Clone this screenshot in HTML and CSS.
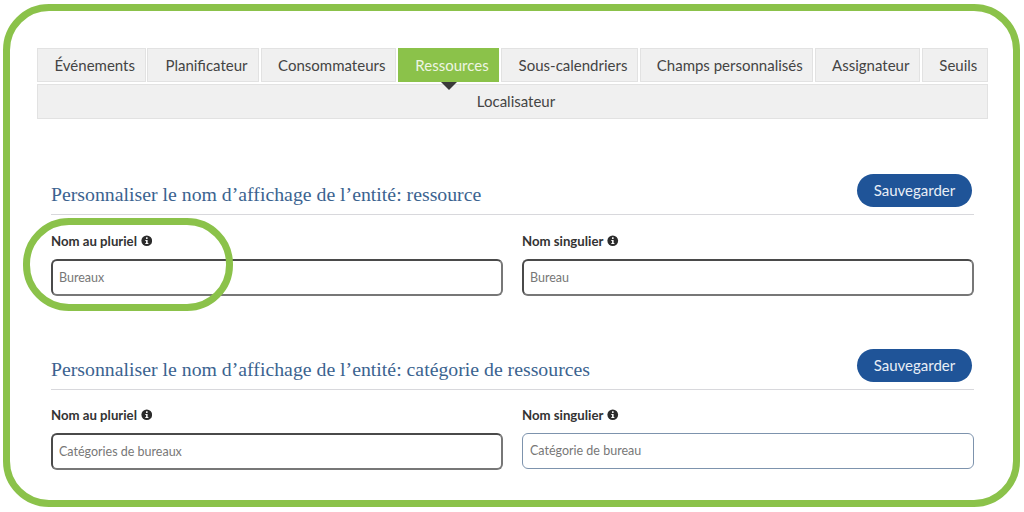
FILE: index.html
```html
<!DOCTYPE html>
<html lang="fr">
<head>
    <meta name="viewport" content="width=device-width, initial-scale=1.0">
    <title>Personnaliser les ressources</title>
    <link rel="stylesheet" href="styles.css">
</head>
<body>
    <div class="frame">
        <nav class="tabs">
            <a class="tab tab-events">Événements</a>
            <a class="tab tab-planner">Planificateur</a>
            <a class="tab tab-consumers">Consommateurs</a>
            <a class="tab tab-resources active">Ressources</a>
            <a class="tab tab-calendars">Sous-calendriers</a>
            <a class="tab tab-fields">Champs personnalisés</a>
            <a class="tab tab-assign">Assignateur</a>
            <a class="tab tab-limits">Seuils</a>
            <a class="tab tab-locator">Localisateur</a>
        </nav>

        <section class="entity entity-first">
            <div class="entity-header">
                <h2>Personnaliser le nom d’affichage de l’entité: ressource</h2>
                <button>Sauvegarder</button>
            </div>
            <div class="fields">
                <div class="field">
                    <label>Nom au pluriel
                        <svg class="info" viewBox="0 0 12 12"><circle cx="6" cy="6" r="5.6" fill="#2b2b2b"/><rect x="5.2" y="2.4" width="1.7" height="1.7" fill="#fff"/><path d="M4.5 5.1h2.4v3.3h.8v1.1H4.5V8.4h.8V6.2h-.8z" fill="#fff"/></svg>
                    </label>
                    <input class="dark" placeholder="Bureaux">
                </div>
                <div class="field">
                    <label>Nom singulier
                        <svg class="info" viewBox="0 0 12 12"><circle cx="6" cy="6" r="5.6" fill="#2b2b2b"/><rect x="5.2" y="2.4" width="1.7" height="1.7" fill="#fff"/><path d="M4.5 5.1h2.4v3.3h.8v1.1H4.5V8.4h.8V6.2h-.8z" fill="#fff"/></svg>
                    </label>
                    <input class="dark" placeholder="Bureau">
                </div>
            </div>
        </section>

        <section class="entity entity-second">
            <div class="entity-header">
                <h2>Personnaliser le nom d’affichage de l’entité: catégorie de ressources</h2>
                <button>Sauvegarder</button>
            </div>
            <div class="fields">
                <div class="field">
                    <label>Nom au pluriel
                        <svg class="info" viewBox="0 0 12 12"><circle cx="6" cy="6" r="5.6" fill="#2b2b2b"/><rect x="5.2" y="2.4" width="1.7" height="1.7" fill="#fff"/><path d="M4.5 5.1h2.4v3.3h.8v1.1H4.5V8.4h.8V6.2h-.8z" fill="#fff"/></svg>
                    </label>
                    <input class="dark" placeholder="Catégories de bureaux">
                </div>
                <div class="field">
                    <label>Nom singulier
                        <svg class="info" viewBox="0 0 12 12"><circle cx="6" cy="6" r="5.6" fill="#2b2b2b"/><rect x="5.2" y="2.4" width="1.7" height="1.7" fill="#fff"/><path d="M4.5 5.1h2.4v3.3h.8v1.1H4.5V8.4h.8V6.2h-.8z" fill="#fff"/></svg>
                    </label>
                    <input class="light" placeholder="Catégorie de bureau">
                </div>
            </div>
        </section>

        <div class="highlight"></div>
    </div>
</body>
</html>
```

FILE: styles.css
```css
html, body {
    margin: 0;
    height: 100%;
    background: #fff;
    overflow: hidden;
}

body {
    font-family: Lato, "Open Sans", sans-serif;
    color: #333;
}

.frame {
    position: relative;
    box-sizing: border-box;
    width: 1017px;
    height: 503px;
    margin: 4px 0 0 3px;
    padding: 37px 24px 0 27px;
    border: 7px solid #8bc24a;
    border-radius: 46px;
}

/* tabs */
.tabs {
    display: flex;
    flex-wrap: wrap;
    gap: 2px 1.75px;
    width: 951px;
}

.tab {
    box-sizing: border-box;
    height: 34px;
    padding-left: 7px;
    line-height: 32px;
    text-align: center;
    font-size: 15px;
    color: #444;
    background: #f0f0f0;
    border: 1px solid #e2e2e2;
}

.tab-events { width: 108.5px; }
.tab-planner { width: 111.5px; }
.tab-consumers { width: 135.5px; }
.tab-resources { width: 101.5px; }
.tab-calendars { width: 137px; }
.tab-fields { width: 173px; }
.tab-assign { width: 105.5px; }
.tab-limits { width: 66.25px; }
.tab-locator { width: 100%; height: 34.5px; }

.tab.active {
    position: relative;
    color: #eef5e3;
    background: #8bc24a;
    border-color: #8bc24a;
}

.tab.active::after {
    content: "";
    position: absolute;
    left: 42px;
    top: 33px;
    border-style: solid;
    border-width: 8px 8px 0;
    border-color: #3a3a3a transparent transparent;
}

/* sections */
.entity {
    width: 923px;
    margin-left: 14px;
}

.entity-first {
    margin-top: 55.5px;
}

.entity-second {
    margin-top: 53.5px;
}

.entity-header {
    display: flex;
    justify-content: space-between;
    align-items: flex-start;
    height: 40px;
    border-bottom: 1px solid #d8d8dc;
}

h2 {
    margin: 9px 0 0;
    font-family: "Liberation Serif", serif;
    font-size: 19.8px;
    font-weight: normal;
    line-height: 23px;
    color: #3b6390;
}

button {
    box-sizing: border-box;
    width: 115px;
    height: 33px;
    margin-right: 2px;
    padding: 0 0 2px;
    border: none;
    border-radius: 17px;
    font-family: inherit;
    font-size: 15px;
    color: #e8eef6;
    background: #1f5498;
}

.fields {
    display: flex;
    gap: 19px;
    width: 923px;
}

.field {
    width: 452px;
}

label {
    display: flex;
    align-items: center;
    gap: 4px;
    height: 16px;
    margin: 18px 0 9.5px;
    font-size: 13.2px;
    font-weight: 700;
    color: #333;
}

.entity-second label {
    margin: 17px 0 10px;
}

.info {
    width: 11.5px;
    height: 11.5px;
}

input {
    display: block;
    box-sizing: border-box;
    width: 100%;
    height: 37px;
    padding: 0 6px;
    border-radius: 6px;
    outline: none;
    font-family: inherit;
    font-size: 12.5px;
    background: #fff;
}

input::placeholder {
    color: #777;
    opacity: 1;
}

input.dark {
    border: 2px solid #4a4a4a;
    border-right-color: #777;
    border-bottom-color: #777;
}

input.light {
    height: 35.5px;
    padding: 0 7px;
    border: 1px solid #7d93ad;
}

/* green ring over the first field */
.highlight {
    position: absolute;
    left: 13px;
    top: 207px;
    box-sizing: border-box;
    width: 210px;
    height: 93px;
    border: 7px solid #8bc24a;
    border-radius: 46px;
}
```
